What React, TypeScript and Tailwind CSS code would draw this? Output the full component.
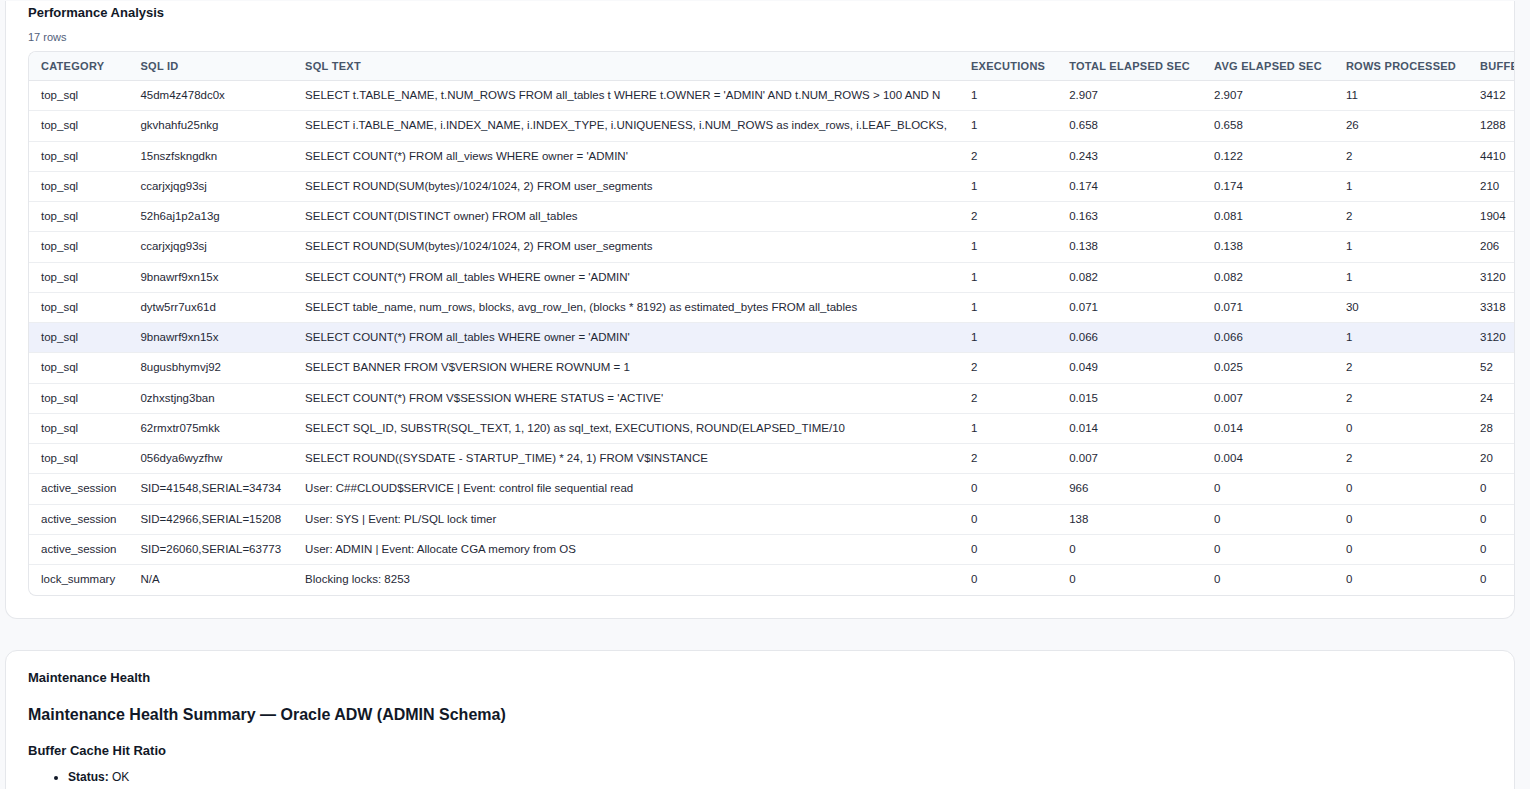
import { useEffect, useRef } from 'react';

const cols = [
  { key: 'CATEGORY', w: 'w-[102px]' },
  { key: 'SQL ID', w: 'w-[168px]' },
  { key: 'SQL TEXT', w: 'w-[678px]' },
  { key: 'EXECUTIONS', w: 'w-[102px]' },
  { key: 'TOTAL ELAPSED SEC', w: 'w-[148px]' },
  { key: 'AVG ELAPSED SEC', w: 'w-[134px]' },
  { key: 'ROWS PROCESSED', w: 'w-[138px]' },
  { key: 'BUFFER GETS', w: 'w-[120px]' },
  { key: 'DISK READS', w: 'w-[120px]' },
];

const rows: string[][] = [
  ['top_sql', '45dm4z478dc0x', "SELECT t.TABLE_NAME, t.NUM_ROWS FROM all_tables t WHERE t.OWNER = 'ADMIN' AND t.NUM_ROWS > 100 AND N", '1', '2.907', '2.907', '11', '3412', '0'],
  ['top_sql', 'gkvhahfu25nkg', 'SELECT i.TABLE_NAME, i.INDEX_NAME, i.INDEX_TYPE, i.UNIQUENESS, i.NUM_ROWS as index_rows, i.LEAF_BLOCKS,', '1', '0.658', '0.658', '26', '1288', '0'],
  ['top_sql', '15nszfskngdkn', "SELECT COUNT(*) FROM all_views WHERE owner = 'ADMIN'", '2', '0.243', '0.122', '2', '4410', '0'],
  ['top_sql', 'ccarjxjqg93sj', 'SELECT ROUND(SUM(bytes)/1024/1024, 2) FROM user_segments', '1', '0.174', '0.174', '1', '210', '0'],
  ['top_sql', '52h6aj1p2a13g', 'SELECT COUNT(DISTINCT owner) FROM all_tables', '2', '0.163', '0.081', '2', '1904', '0'],
  ['top_sql', 'ccarjxjqg93sj', 'SELECT ROUND(SUM(bytes)/1024/1024, 2) FROM user_segments', '1', '0.138', '0.138', '1', '206', '0'],
  ['top_sql', '9bnawrf9xn15x', "SELECT COUNT(*) FROM all_tables WHERE owner = 'ADMIN'", '1', '0.082', '0.082', '1', '3120', '0'],
  ['top_sql', 'dytw5rr7ux61d', 'SELECT table_name, num_rows, blocks, avg_row_len, (blocks * 8192) as estimated_bytes FROM all_tables', '1', '0.071', '0.071', '30', '3318', '0'],
  ['top_sql', '9bnawrf9xn15x', "SELECT COUNT(*) FROM all_tables WHERE owner = 'ADMIN'", '1', '0.066', '0.066', '1', '3120', '0'],
  ['top_sql', '8ugusbhymvj92', 'SELECT BANNER FROM V$VERSION WHERE ROWNUM = 1', '2', '0.049', '0.025', '2', '52', '0'],
  ['top_sql', '0zhxstjng3ban', "SELECT COUNT(*) FROM V$SESSION WHERE STATUS = 'ACTIVE'", '2', '0.015', '0.007', '2', '24', '0'],
  ['top_sql', '62rmxtr075mkk', 'SELECT SQL_ID, SUBSTR(SQL_TEXT, 1, 120) as sql_text, EXECUTIONS, ROUND(ELAPSED_TIME/10', '1', '0.014', '0.014', '0', '28', '0'],
  ['top_sql', '056dya6wyzfhw', 'SELECT ROUND((SYSDATE - STARTUP_TIME) * 24, 1) FROM V$INSTANCE', '2', '0.007', '0.004', '2', '20', '0'],
  ['active_session', 'SID=41548,SERIAL=34734', 'User: C##CLOUD$SERVICE | Event: control file sequential read', '0', '966', '0', '0', '0', '0'],
  ['active_session', 'SID=42966,SERIAL=15208', 'User: SYS | Event: PL/SQL lock timer', '0', '138', '0', '0', '0', '0'],
  ['active_session', 'SID=26060,SERIAL=63773', 'User: ADMIN | Event: Allocate CGA memory from OS', '0', '0', '0', '0', '0', '0'],
  ['lock_summary', 'N/A', 'Blocking locks: 8253', '0', '0', '0', '0', '0', '0'],
];

export default function App() {
  const ref = useRef<HTMLDivElement>(null);
  useEffect(() => {
    if (ref.current) ref.current.scrollTop = 3000;
  }, []);

  return (
    <div
      ref={ref}
      className="h-screen w-screen overflow-scroll bg-[#f8f9fb] text-[#111827]"
      style={{ fontFamily: '"Liberation Sans", Arial, sans-serif' }}
    >
      <div className="w-[2250px] pl-[5px]">
        <div className="h-[2998px] border-b border-[#fbd5d5]" />
        <div className="h-[3px]" />

        {/* Performance Analysis */}
        <div className="w-[1510px] overflow-hidden rounded-b-xl border border-t-0 border-[#e5e7eb] bg-white pb-[22px] pl-[22px] pt-[3px]">
          <h3 className="text-[13px] font-bold leading-[18px]">Performance Analysis</h3>
          <div className="mt-[7px] text-[11px] text-[#52607a]">17 rows</div>
          <div className="mt-[5px] overflow-hidden rounded-l-lg border border-r-0 border-[#e5e7eb]">
            <table className="border-collapse text-left">
              <thead>
                <tr className="h-[29px] border-b border-[#e5e7eb] bg-[#f8fafc]">
                  {cols.map((c) => (
                    <th key={c.key} className={`${c.w} whitespace-nowrap px-3 text-[11px] font-bold tracking-wide text-[#475569]`}>
                      {c.key}
                    </th>
                  ))}
                </tr>
              </thead>
              <tbody>
                {rows.map((r, i) => (
                  <tr
                    key={i}
                    className={`h-[30.25px] border-b border-[#eceef1] last:border-b-0 ${i === 8 ? 'bg-[#eef1fb]' : ''}`}
                  >
                    {r.map((v, j) => (
                      <td key={j} className="whitespace-nowrap px-3 text-[11.5px] text-[#1f2937]">
                        {v}
                      </td>
                    ))}
                  </tr>
                ))}
              </tbody>
            </table>
          </div>
        </div>

        <div className="h-[31px]" />

        {/* Maintenance Health */}
        <div className="w-[1510px] rounded-xl border border-[#e5e7eb] bg-white px-[22px] pb-10 pt-[18px]">
          <h3 className="text-[13px] font-bold leading-[18px]">Maintenance Health</h3>
          <h2 className="mt-[16px] text-[16px] font-bold">Maintenance Health Summary — Oracle ADW (ADMIN Schema)</h2>
          <h4 className="mt-[14px] text-[13px] font-bold">Buffer Cache Hit Ratio</h4>
          <ul className="mt-[8px] list-disc pl-10 text-[12px]">
            <li><b>Status:</b> OK</li>
            <li><b>Hit ratio:</b> 99.8%</li>
            <li>Buffer cache is performing well.</li>
          </ul>
          <h4 className="mt-[16px] text-[13px] font-bold">Tablespace Usage</h4>
          <ul className="mt-[8px] list-disc pl-10 text-[12px]">
            <li><b>Status:</b> OK</li>
          </ul>
          <div className="h-[2000px]" />
        </div>
      </div>
    </div>
  );
}
